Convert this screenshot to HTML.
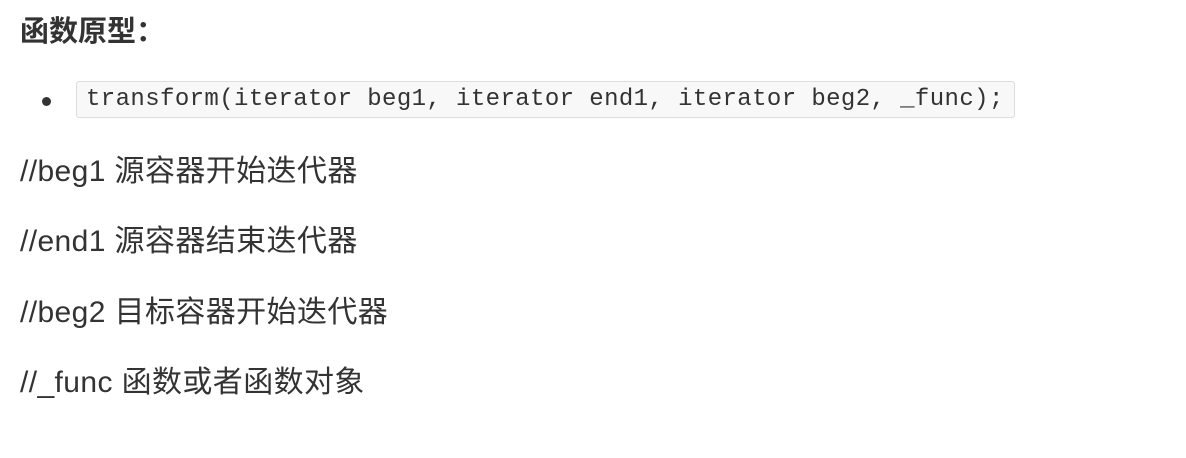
<!DOCTYPE html>
<html><head><meta charset="utf-8"><style>
body{margin:0;width:1186px;height:458px;background:#fff;position:relative;overflow:hidden;color:#333;font-family:"Liberation Sans","Noto Sans CJK SC",sans-serif}
.h{position:absolute;left:20px;top:14px;font-size:29px;font-weight:bold;line-height:36px}
.dot{position:absolute;left:42px;top:97px;width:9px;height:9px;border-radius:50%;background:#333}
.code{position:absolute;left:76px;top:81px;width:939px;height:37px;border:1px solid #ddd;border-radius:3px;background:#f8f8f8;box-sizing:border-box}
.code span{position:absolute;left:9px;top:5px;font-family:"Liberation Mono",monospace;font-size:24px;letter-spacing:0.4px;line-height:26px;color:#333;white-space:pre}
.t{position:absolute;left:20px;font-size:30px;line-height:34px;white-space:pre;letter-spacing:0.4px}
</style></head><body>
<div class="h">函数原型：</div>
<div class="dot"></div>
<div class="code"><span>transform(iterator beg1, iterator end1, iterator beg2, _func);</span></div>
<div class="t" style="top:155px">//beg1 源容器开始迭代器</div>
<div class="t" style="top:225px">//end1 源容器结束迭代器</div>
<div class="t" style="top:296px">//beg2 目标容器开始迭代器</div>
<div class="t" style="top:366px">//_func 函数或者函数对象</div>
</body></html>
